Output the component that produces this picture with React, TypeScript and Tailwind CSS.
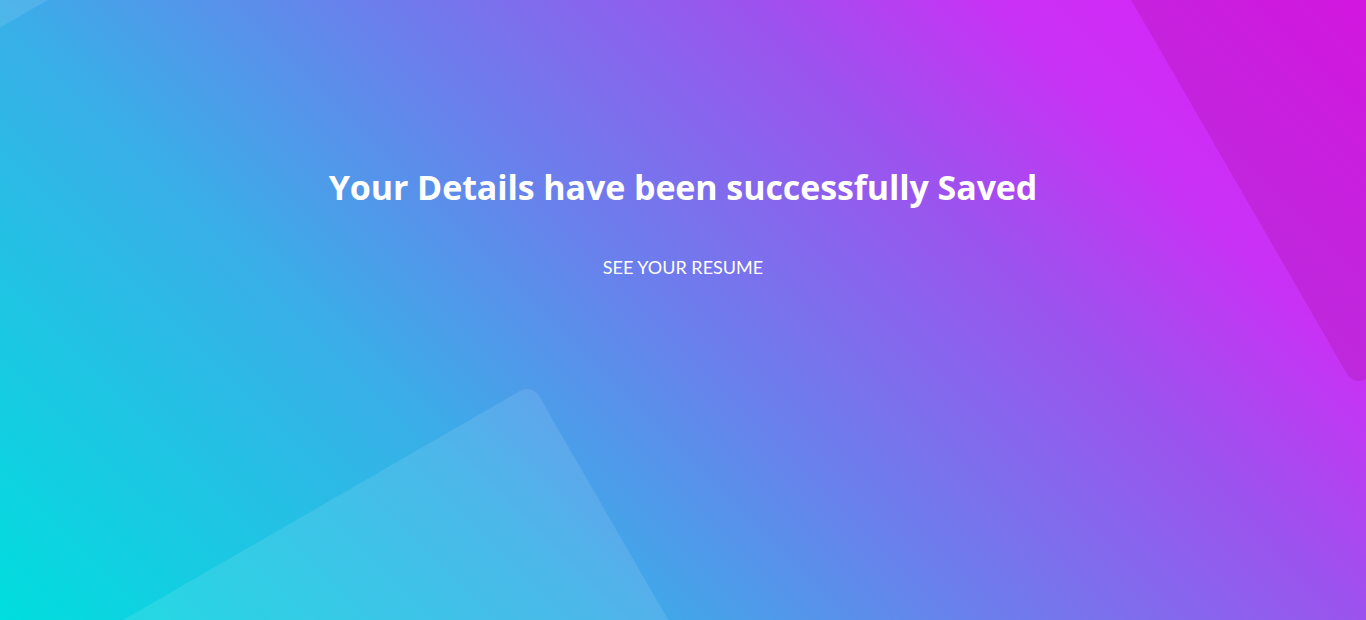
const SavedPage = () => {
  return (
    <div className="relative h-[620px] w-full overflow-hidden bg-[linear-gradient(45deg,#00dede_0%,#3aaee8_31%,#6a80ec_49%,#9d52ee_69%,#c832f5_81%,#e21cfa_100%)] text-white">
      {/* background shapes */}
      <div className="absolute left-[-200px] top-[-457px] h-[600px] w-[600px] origin-bottom-left -rotate-30 rounded-[14px] bg-white/10" />
      <div className="absolute left-[1354px] top-[-414px] h-[800px] w-[800px] origin-bottom-left -rotate-30 rounded-[14px] bg-[#960078]/20" />
      <div className="absolute left-[-268px] top-[384px] h-[800px] w-[800px] origin-top-right -rotate-30 rounded-[14px] bg-white/10" />

      <div className="relative flex flex-col items-center pt-[166px]">
        <h1 className="font-['Open_Sans','Noto_Sans',sans-serif] text-[34px] font-bold leading-[42px] tracking-[-0.1px]">
          Your Details have been successfully Saved
        </h1>
        <a href="#" className="mt-[46px] font-['Lato','Noto_Sans',sans-serif] text-[18px] leading-[27px] uppercase">
          See your resume
        </a>
      </div>
    </div>
  );
};

export default function App() {
  return <SavedPage />;
}
